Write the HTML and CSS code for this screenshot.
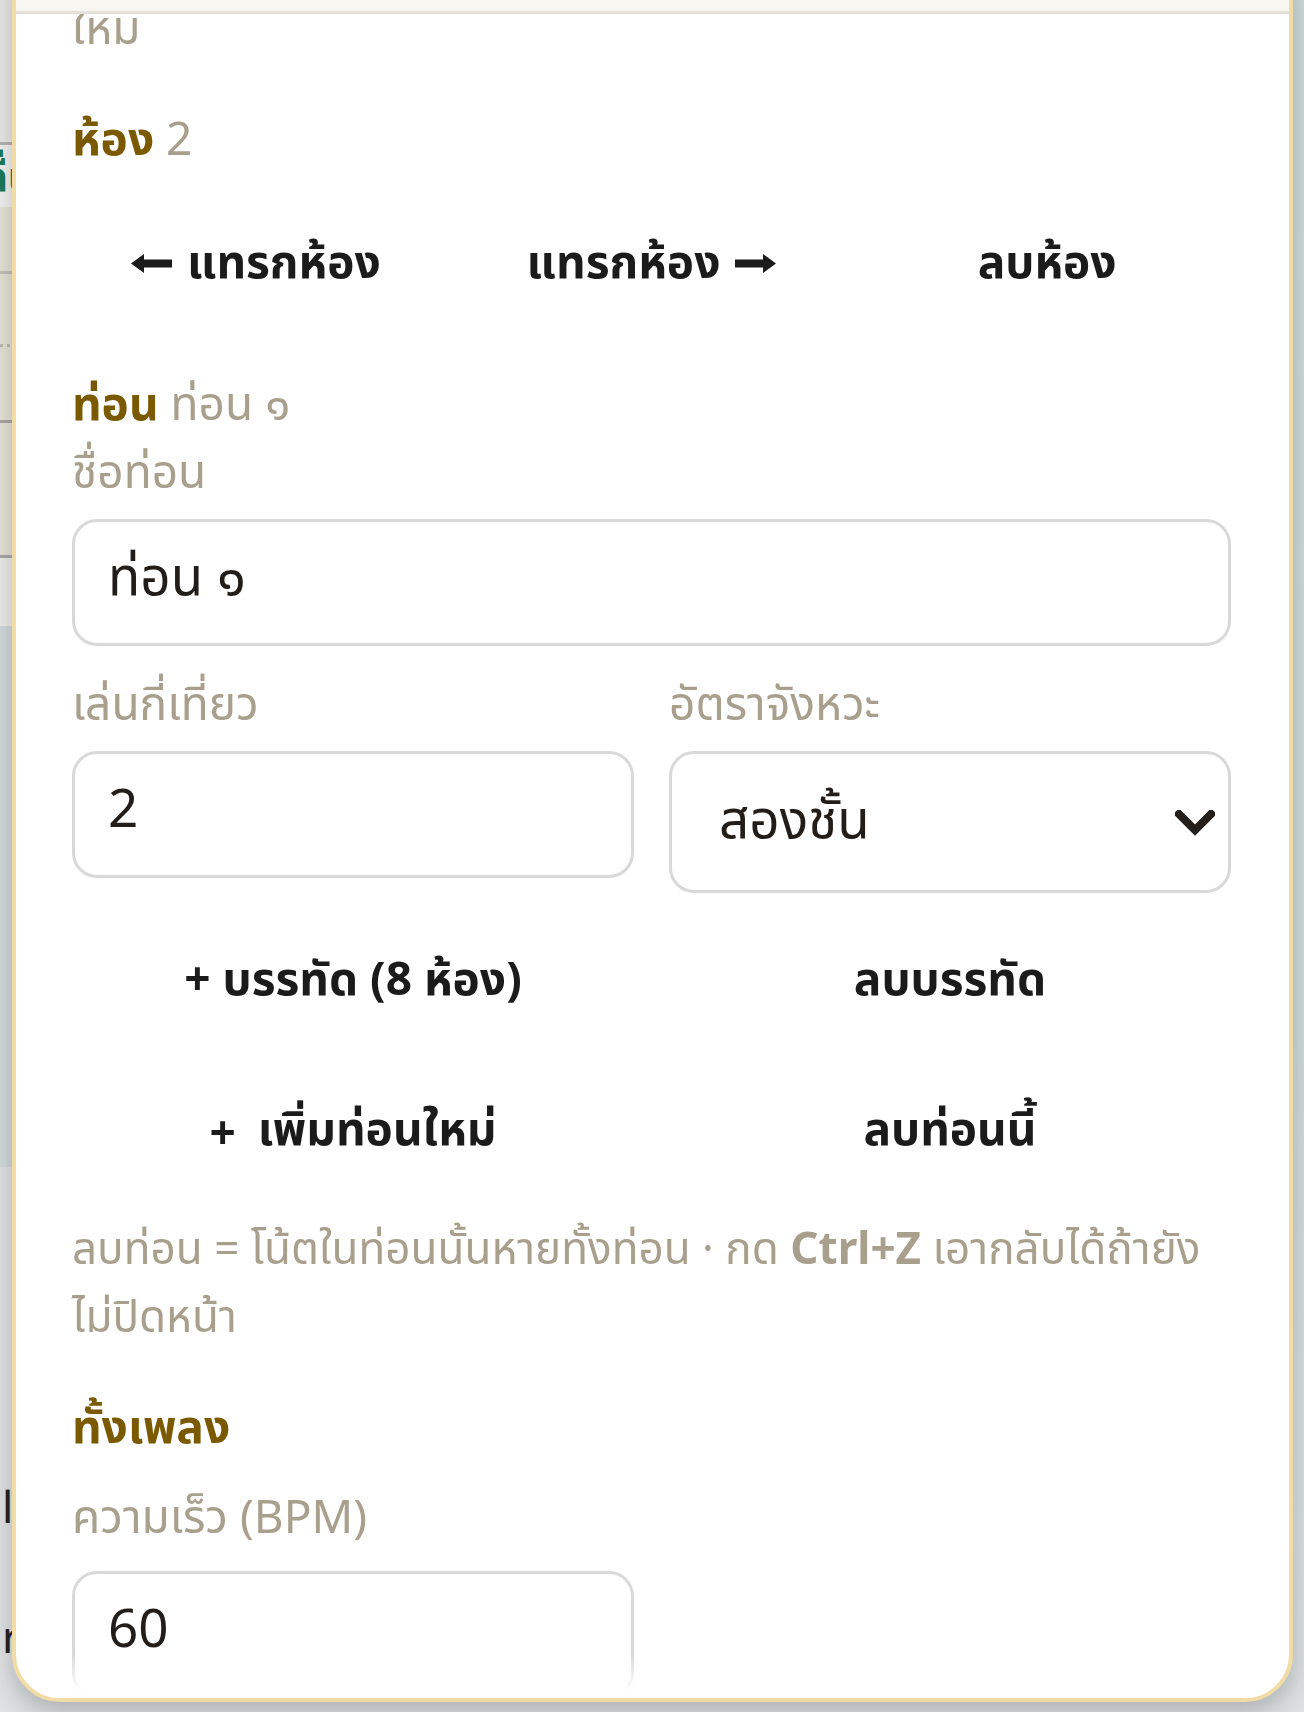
FILE: index.html
```html
<!DOCTYPE html>
<html lang="th">
<head>
<meta charset="utf-8">
<title>แก้ไขท่อน</title>
<link rel="stylesheet" href="styles.css">
</head>
<body>
<div class="page">
  <div class="page-side">
    <div class="ps-top"></div>
    <div class="ps-rule"></div>
    <div class="ps-green"><span>ลื่น</span></div>
    <div class="ps-beige">
      <div class="ps-line"></div>
      <div class="ps-dots"></div>
      <div class="ps-line dark"></div>
    </div>
    <div class="ps-rule2"></div>
    <div class="ps-light"></div>
    <div class="ps-blue"></div>
    <div class="ps-grey">
      <div class="ps-frag f1">l</div>
      <div class="ps-frag f2">r</div>
    </div>
  </div>
  <div class="page-main"></div>
</div>

<div class="overlay">
  <section class="sheet">
    <header class="sheet-head"></header>
    <div class="sheet-body">
      <p class="tail">ใหม่</p>

      <h3 class="sec-title s-bar"><b>ห้อง</b> 2</h3>
      <div class="btn-row three">
        <button class="btn"><svg class="arrow" viewBox="0 0 41 19" aria-hidden="true"><polygon points="0,9.5 13,0 13,5.5 41,5.5 41,13.5 13,13.5 13,19" fill="#1b1b1b"/></svg><span>แทรกห้อง</span></button>
        <button class="btn"><span>แทรกห้อง</span><svg class="arrow" viewBox="0 0 41 19" aria-hidden="true"><polygon points="41,9.5 28,0 28,5.5 0,5.5 0,13.5 28,13.5 28,19" fill="#1b1b1b"/></svg></button>
        <button class="btn"><span>ลบห้อง</span></button>
      </div>

      <h3 class="sec-title s-part"><b>ท่อน</b> ท่อน ๑</h3>
      <label class="field">
        <span class="lbl">ชื่อท่อน</span>
        <input class="inp" type="text" value="ท่อน ๑">
      </label>
      <div class="grid2">
        <label class="field">
          <span class="lbl">เล่นกี่เที่ยว</span>
          <input class="inp num" type="text" inputmode="numeric" value="2">
        </label>
        <label class="field">
          <span class="lbl">อัตราจังหวะ</span>
          <span class="select-wrap">
            <select class="sel"><option>สองชั้น</option><option>ชั้นเดียว</option><option>สามชั้น</option></select>
            <svg class="chev" viewBox="0 0 40 26" aria-hidden="true"><polyline points="4,4 20,20 36,4" fill="none" stroke="#241f1a" stroke-width="8" stroke-linecap="square"/></svg>
          </span>
        </label>
      </div>
      <div class="btn-row two r-line">
        <button class="btn"><span>+ บรรทัด (8 ห้อง)</span></button>
        <button class="btn"><span>ลบบรรทัด</span></button>
      </div>
      <div class="btn-row two r-part">
        <button class="btn"><span class="plus">+</span><span>เพิ่มท่อนใหม่</span></button>
        <button class="btn"><span>ลบท่อนนี้</span></button>
      </div>
      <p class="help">ลบท่อน = โน้ตในท่อนนั้นหายทั้งท่อน · กด <b>Ctrl+Z</b> เอากลับได้ถ้ายังไม่ปิดหน้า</p>

      <h3 class="sec-title s-song"><b>ทั้งเพลง</b></h3>
      <div class="grid2 g-song">
        <label class="field">
          <span class="lbl">ความเร็ว (BPM)</span>
          <input class="inp num" type="text" inputmode="numeric" value="60">
        </label>
      </div>
    </div>
  </section>
</div>
</body>
</html>
```

FILE: styles.css
```css
html, body {
  margin: 0;
  padding: 0;
  height: 100%;
  overflow: hidden;
}

body {
  font-family: "Noto Sans", "Noto Sans Thai", sans-serif;
  background: #cfdbd9;
}

/* ---------- background page (behind the sheet) ---------- */
.page {
  display: flex;
  height: 100%;
}

.page-side {
  width: 16px;
  display: flex;
  flex-direction: column;
  overflow: hidden;
}

.page-main {
  flex: 1;
  background: linear-gradient(#cedbd8, #cfdcd9 60%, #dde1e3);
}

.ps-top { height: 142px; background: #e8e8e6; }
.ps-rule { height: 3px; background: #b4b4b1; }
.ps-green {
  height: 62px;
  background: #f1f1ef;
  color: #1d7a5b;
  font-size: 40px;
  font-weight: 700;
  line-height: 62px;
  white-space: nowrap;
  overflow: hidden;
}
.ps-green span { display: block; margin-left: -16px; }
.ps-beige {
  height: 284px;
  background: #e5e2d7;
  display: flex;
  flex-direction: column;
  padding-top: 64px;
  gap: 70px;
}
.ps-line { height: 3px; background: #c3c0b8; }
.ps-line.dark { background: #aaa8a1; }
.ps-dots { height: 3px; border-top: 3px dotted #bcb9b0; }
.ps-rule2 { height: 3px; background: #a9a9a8; }
.ps-light { height: 68px; background: #ececea; }
.ps-blue { height: 541px; background: #d2dadb; }
.ps-grey {
  flex: 1;
  background: #e0e1e3;
  display: flex;
  flex-direction: column;
  padding-top: 314px;
  gap: 80px;
  color: #222;
  font-size: 44px;
  line-height: 50px;
}
.ps-frag { padding-left: 2px; }

/* ---------- overlay + sheet ---------- */
.overlay {
  position: fixed;
  inset: 0;
  display: flex;
  padding: 0 11px 10px 12px;
}

.sheet {
  flex: 1;
  margin-top: -60px;
  display: flex;
  flex-direction: column;
  background: #fff;
  border: 4px solid #f1dca6;
  border-radius: 48px;
  overflow: hidden;
  box-shadow: 0 10px 26px rgba(0, 0, 0, 0.22);
}

.sheet-head {
  flex: none;
  height: 67px;
  background: #f8f6f1;
  border-bottom: 3px solid #e5e2db;
}

.sheet-body {
  flex: 1;
  position: relative;
  overflow: hidden;
  padding: 0 58px 0 56px;
  display: flex;
  flex-direction: column;
  color: #a99f8d;
  font-size: 46px;
  line-height: 68px;
}

.sheet-body::after {
  content: "";
  position: absolute;
  left: 0;
  right: 0;
  bottom: 0;
  height: 44px;
  background: linear-gradient(rgba(255, 255, 255, 0), #fff 85%);
  pointer-events: none;
}

.tail {
  margin: -22px 0 0;
}

.sec-title {
  margin: 0;
  font-size: 46px;
  font-weight: 400;
  line-height: 68px;
  color: #a99f8d;
}
.sec-title b { color: #7a5900; font-weight: 700; }
.s-bar { margin-top: 43px; }
.s-part { margin-top: 44px; }
.s-song { margin-top: 42px; }

.field {
  display: flex;
  flex-direction: column;
  gap: 15px;
}
.lbl { display: block; }

.inp,
.sel {
  box-sizing: border-box;
  width: 100%;
  height: 127px;
  margin: 0;
  border: 3px solid #d9d9d9;
  border-radius: 25px;
  background: #fff;
  color: #221d18;
  font-family: inherit;
  font-size: 53px;
  padding: 0 35px 8px 33px;
  outline: none;
}
.inp.num { padding-bottom: 16px; }

.grid2 {
  display: grid;
  grid-template-columns: 1fr 1fr;
  column-gap: 35px;
  align-items: start;
  margin-top: 22px;
}
.g-song { margin-top: 22px; }
.g-song .field { gap: 22px; }

.select-wrap {
  position: relative;
  display: block;
}
.sel {
  height: 142px;
  appearance: none;
  -webkit-appearance: none;
  padding: 0 90px 10px 47px;
}
.chev {
  position: absolute;
  right: 16px;
  top: 59px;
  width: 40px;
  height: 26px;
  pointer-events: none;
}

.btn-row {
  display: grid;
  column-gap: 28px;
}
.btn-row.three { grid-template-columns: repeat(3, 1fr); margin-top: 33px; }
.btn-row.two { grid-template-columns: 1fr 1fr; column-gap: 35px; }
.r-line { margin-top: 28px; }
.r-part { margin-top: 30px; }

.btn {
  height: 120px;
  margin: 0;
  padding: 0;
  border: 0;
  background: transparent;
  color: #1b1b1b;
  font-family: inherit;
  font-size: 46px;
  font-weight: 700;
  display: flex;
  align-items: center;
  justify-content: center;
  gap: 15px;
  cursor: pointer;
}
.arrow {
  width: 41px;
  height: 19px;
  flex: none;
  margin-bottom: 1px;
}
.plus { margin-right: 7px; }

.help {
  margin: 22px 0 0;
  font-size: 44px;
}
.help b { font-weight: 700; }
```
